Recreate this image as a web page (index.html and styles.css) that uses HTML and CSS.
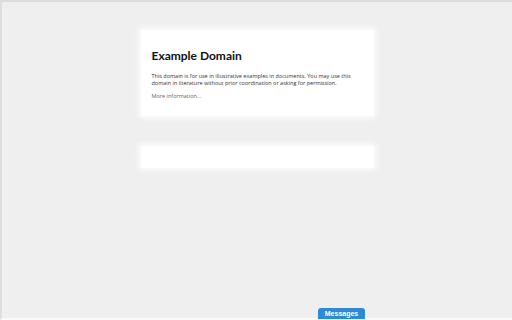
FILE: index.html
```html
<!DOCTYPE html>
<html lang="en">
    <head>
        <meta charset="UTF-8" />
        <meta name="viewport" content="width=device-width, initial-scale=1.0" />
        <title>Example Domain</title>
        <link rel="stylesheet" href="styles.css">
    </head>
    <body>
        <div class="frame">
            <div class="page">
                <div class="card">
                    <h1>Example Domain</h1>
                    <p>This domain is for use in illustrative examples in documents. You may use this domain in literature without prior coordination or asking for permission.</p>
                    <p><a href="#">More information...</a></p>
                </div>
                <div class="card card-empty"></div>
            </div>
        </div>
        <div class="messages">Messages</div>
    </body>
</html>
```

FILE: styles.css
```css
*,
*::before,
*::after {
    box-sizing: border-box;
}

html,
body {
    margin: 0;
    height: 100%;
}

body {
    background: #efefef;
    font-family: "Open Sans", "Noto Sans", sans-serif;
    color: #222;
    overflow: hidden;
}

.frame {
    height: 100%;
    border-top: 2px solid #dcdcdc;
    border-left: 2px solid #dedede;
    border-bottom: 2px solid #fafafa;
}

.page {
    width: 233px;
    margin: 0 auto;
    padding-top: 28px;
}

.card {
    background: #fff;
    box-shadow: 0 0 6px 2px rgba(255, 255, 255, 0.9);
    padding: 17px 11px 10px;
}

.card h1 {
    margin: 0 0 8px;
    font-family: Lato, "Open Sans", sans-serif;
    font-size: 12px;
    font-weight: 700;
    color: #111;
    line-height: 18px;
}

.card p {
    max-width: 208px;
    margin: 0 0 6px;
    font-size: 5.5px;
    line-height: 7px;
    color: #333;
}

.card a {
    color: #666;
    text-decoration: none;
}

.card-empty {
    margin-top: 30px;
    height: 22px;
    padding: 0;
}

.messages {
    position: absolute;
    left: 318px;
    bottom: 1px;
    width: 47px;
    height: 11px;
    background: #2d8ad6;
    color: #fff;
    font-family: "Liberation Sans", sans-serif;
    font-weight: 700;
    font-size: 7px;
    line-height: 11px;
    text-align: center;
    border-radius: 3px 3px 0 0;
}
```
